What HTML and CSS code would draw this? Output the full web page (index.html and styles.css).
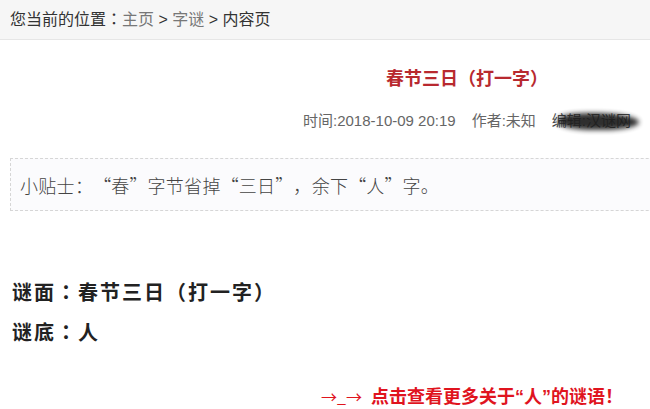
FILE: index.html
```html
<!DOCTYPE html>
<html lang="zh">
<head>
<meta charset="utf-8">
<title>春节三日（打一字）</title>
<link rel="stylesheet" href="styles.css">
</head>
<body>
<div class="crumb">
  <span class="dark">您当前的位置<span class="colon" lang="ja">：</span></span><a class="gray">主页</a><span class="dark"> &gt; </span><a class="gray">字谜</a><span class="dark"> &gt; 内容页</span>
</div>
<div class="article">
  <div class="wide">
    <h1 class="title">春节三日（打一字）</h1>
    <div class="meta">时间:2018-10-09 20:19<span class="sep"></span>作者:未知<span class="sep"></span><span class="editor">编辑:汉谜网<span class="blot"></span></span></div>
    <div class="tip">小贴士：<span class="ql">“</span>春<span class="qr">”</span>字节省掉<span class="ql">“</span>三日<span class="qr">”</span>，余下<span class="ql">“</span>人<span class="qr">”</span>字。</div>
  </div>
  <div class="riddle">
    <p class="line">谜面<span class="colon" lang="ja">：</span>春节三日（打一字）</p>
    <p class="line">谜底<span class="colon" lang="ja">：</span>人</p>
  </div>
  <div class="more"><span class="arrow">→_→</span> <a>点击查看更多关于“人”的谜语！</a></div>
</div>
</body>
</html>
```
FILE: styles.css
```css
html, body {
  margin: 0;
  padding: 0;
  background: #fff;
  overflow: hidden;
  width: 650px;
  height: 409px;
  font-family: "Liberation Sans", "Noto Sans CJK SC", sans-serif;
}
.colon {
  font-family: "Noto Sans CJK JP", sans-serif;
}
.crumb {
  height: 39px;
  line-height: 37px;
  background: #f6f6f6;
  border-bottom: 1px solid #e6e6e6;
  padding-left: 10px;
  font-size: 16px;
  white-space: nowrap;
}
.crumb .dark { color: #333; }
.crumb .gray { color: #777; }
.article {
  padding-top: 25px;
}
.wide {
  width: 934px;
}
.title {
  margin: 0;
  text-align: center;
  font-size: 18px;
  font-weight: bold;
  color: #b8292f;
  line-height: 28px;
}
.meta {
  margin-top: 18px;
  text-align: center;
  font-size: 15px;
  color: #666;
  line-height: 20px;
  white-space: nowrap;
}
.sep {
  display: inline-block;
  width: 16px;
}
.editor {
  position: relative;
  color: #444;
}
.blot {
  position: absolute;
  left: 6px;
  right: -8px;
  top: 1px;
  bottom: -1px;
  background: #1e1e1e;
  border-radius: 40% 60% 50% 50%;
  filter: blur(2.5px);
  opacity: 0.92;
}
.tip {
  margin: 27px 0 0 10px;
  height: 51px;
  line-height: 53px;
  border: 1px dashed #d6d6d6;
  background: #fbfbfd;
  padding-left: 9px;
  font-size: 18px;
  letter-spacing: 0.3px;
  color: #444;
  font-family: "Noto Sans CJK SC", sans-serif;
  font-weight: 300;
  white-space: nowrap;
}
.ql, .qr {
  display: inline-block;
  width: 1em;
}
.ql { text-align: right; }
.qr { text-align: left; }
.riddle {
  margin-top: 69px;
  padding-left: 12px;
}
.line {
  margin: 0 0 15px;
  font-size: 20px;
  line-height: 24px;
  font-weight: bold;
  letter-spacing: 2px;
  color: #222;
}
.more {
  margin-top: 40px;
  text-align: right;
  padding-right: 27px;
  font-size: 18px;
  line-height: 22px;
  white-space: nowrap;
}
.more .arrow {
  color: #e0141e;
  font-family: "Noto Sans CJK SC", sans-serif;
  font-size: 16px;
  margin-right: 4px;
}
.more a {
  color: #e0141e;
  font-weight: bold;
}
```
